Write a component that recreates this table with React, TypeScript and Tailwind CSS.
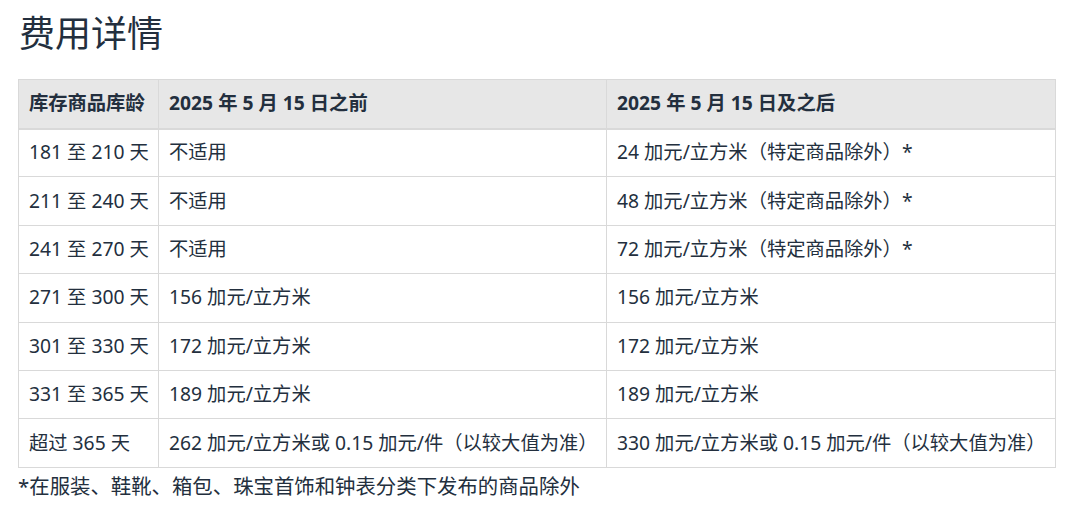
export default function App() {
  const rows = [
    ["181 至 210 天", "不适用", "24 加元/立方米（特定商品除外）*"],
    ["211 至 240 天", "不适用", "48 加元/立方米（特定商品除外）*"],
    ["241 至 270 天", "不适用", "72 加元/立方米（特定商品除外）*"],
    ["271 至 300 天", "156 加元/立方米", "156 加元/立方米"],
    ["301 至 330 天", "172 加元/立方米", "172 加元/立方米"],
    ["331 至 365 天", "189 加元/立方米", "189 加元/立方米"],
    ["超过 365 天", "262 加元/立方米或 0.15 加元/件（以较大值为准）", "330 加元/立方米或 0.15 加元/件（以较大值为准）"],
  ];

  return (
    <div
      className="min-h-screen bg-white px-[18px] pt-[10px] text-[#232f3e]"
      style={{ fontFamily: '"Noto Sans", "Noto Sans CJK SC", sans-serif' }}
    >
      <h1 className="ml-[1px] text-[36px] leading-[48px] font-normal text-[#232f3e]">费用详情</h1>
      <table className="mt-[21px] w-[1037px] table-fixed border-collapse text-[19.3px]">
        <colgroup>
          <col className="w-[140px]" />
          <col className="w-[448px]" />
          <col className="w-[449px]" />
        </colgroup>
        <thead>
          <tr className="bg-[#e7e7e7]">
            <th className="h-[49px] border border-b-2 border-[#d9d9d9] px-[10px] text-left font-bold">库存商品库龄</th>
            <th className="h-[49px] border border-b-2 border-[#d9d9d9] px-[10px] text-left font-bold">2025 年 5 月 15 日之前</th>
            <th className="h-[49px] border border-b-2 border-[#d9d9d9] px-[10px] text-left font-bold">2025 年 5 月 15 日及之后</th>
          </tr>
        </thead>
        <tbody>
          {rows.map((r) => (
            <tr key={r[0]}>
              {r.map((c, i) => (
                <td key={i} className="h-[48.4px] whitespace-nowrap border border-[#d9d9d9] px-[10px] text-left">
                  {c}
                </td>
              ))}
            </tr>
          ))}
        </tbody>
      </table>
      <p className="mt-[3px] text-[20.4px] leading-[30px]">*在服装、鞋靴、箱包、珠宝首饰和钟表分类下发布的商品除外</p>
    </div>
  );
}
